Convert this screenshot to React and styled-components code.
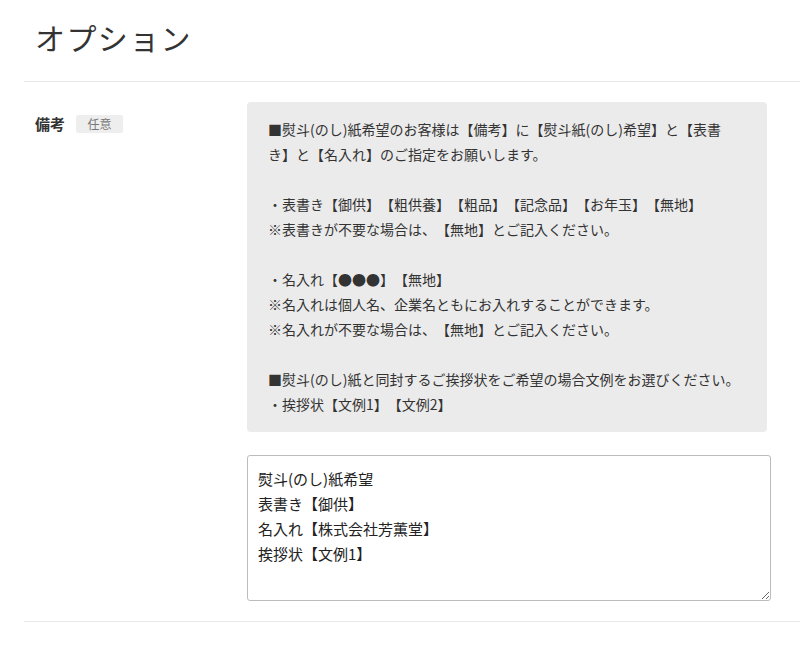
import React from 'react';
import styled, { createGlobalStyle } from 'styled-components';

const GlobalStyle = createGlobalStyle`
  body {
    margin: 0;
    background: #fff;
    color: #333;
    font-family: "Noto Sans CJK JP", "Noto Sans", sans-serif;
  }
`;

const Page = styled.div`
  padding-left: 24px;
  width: 776px;
`;

const Heading = styled.h2`
  margin: 0;
  height: 82px;
  box-sizing: border-box;
  padding: 15px 11px 0;
  font-size: 30px;
  font-weight: 400;
  letter-spacing: 1.4px;
  line-height: 44px;
  color: #333;
  border-bottom: 1px solid #e8e8e8;
`;

const Row = styled.div`
  display: flex;
  padding: 20px 0 20px;
  border-bottom: 1px solid #e8e8e8;
`;

const LabelCol = styled.div`
  width: 212px;
  padding-left: 11px;
  padding-top: 12px;
  display: flex;
  align-items: flex-start;
  gap: 11px;
`;

const Label = styled.span`
  font-size: 15px;
  font-weight: 700;
  line-height: 20px;
  color: #333;
`;

const Badge = styled.span`
  display: inline-block;
  width: 47px;
  height: 18px;
  margin-top: 1px;
  line-height: 18px;
  text-align: center;
  font-size: 12px;
  font-weight: 400;
  color: #777;
  background: #eee;
  border-radius: 2px;
`;

const FieldCol = styled.div`
  width: 524px;
  display: flex;
  flex-direction: column;
  gap: 23px;
`;

const Note = styled.div`
  width: 520px;
  box-sizing: border-box;
  padding: 15px 20px 15px 21px;
  background: #ebebeb;
  border-radius: 4px;
  font-size: 14px;
  line-height: 25px;
  color: #333;
  white-space: nowrap;
  text-spacing-trim: space-all;
`;

const Blank = styled.div`
  height: 25px;
`;

const TextArea = styled.textarea`
  display: block;
  width: 524px;
  height: 146px;
  box-sizing: border-box;
  margin: 0;
  padding: 10px 10px;
  border: 1px solid #bcbcbc;
  border-radius: 3px;
  font-family: "Noto Sans CJK JP", "Noto Sans", sans-serif;
  font-size: 15px;
  line-height: 25px;
  color: #222;
  text-spacing-trim: space-all;
  resize: both;
  outline: none;
`;

const value = `熨斗(のし)紙希望
表書き【御供】
名入れ【株式会社芳薫堂】
挨拶状【文例1】`;

export default function App() {
  return (
    <Page>
      <GlobalStyle />
      <Heading>オプション</Heading>
      <Row>
        <LabelCol>
          <Label>備考</Label>
          <Badge>任意</Badge>
        </LabelCol>
        <FieldCol>
          <Note>
            <div>■熨斗(のし)紙希望のお客様は【備考】に【熨斗紙(のし)希望】と【表書</div>
            <div>き】と【名入れ】のご指定をお願いします。</div>
            <Blank />
            <div>・表書き【御供】【粗供養】【粗品】【記念品】【お年玉】【無地】</div>
            <div>※表書きが不要な場合は、【無地】とご記入ください。</div>
            <Blank />
            <div>・名入れ【●●●】【無地】</div>
            <div>※名入れは個人名、企業名ともにお入れすることができます。</div>
            <div>※名入れが不要な場合は、【無地】とご記入ください。</div>
            <Blank />
            <div>■熨斗(のし)紙と同封するご挨拶状をご希望の場合文例をお選びください。</div>
            <div>・挨拶状【文例1】【文例2】</div>
          </Note>
          <TextArea defaultValue={value} />
        </FieldCol>
      </Row>
    </Page>
  );
}
